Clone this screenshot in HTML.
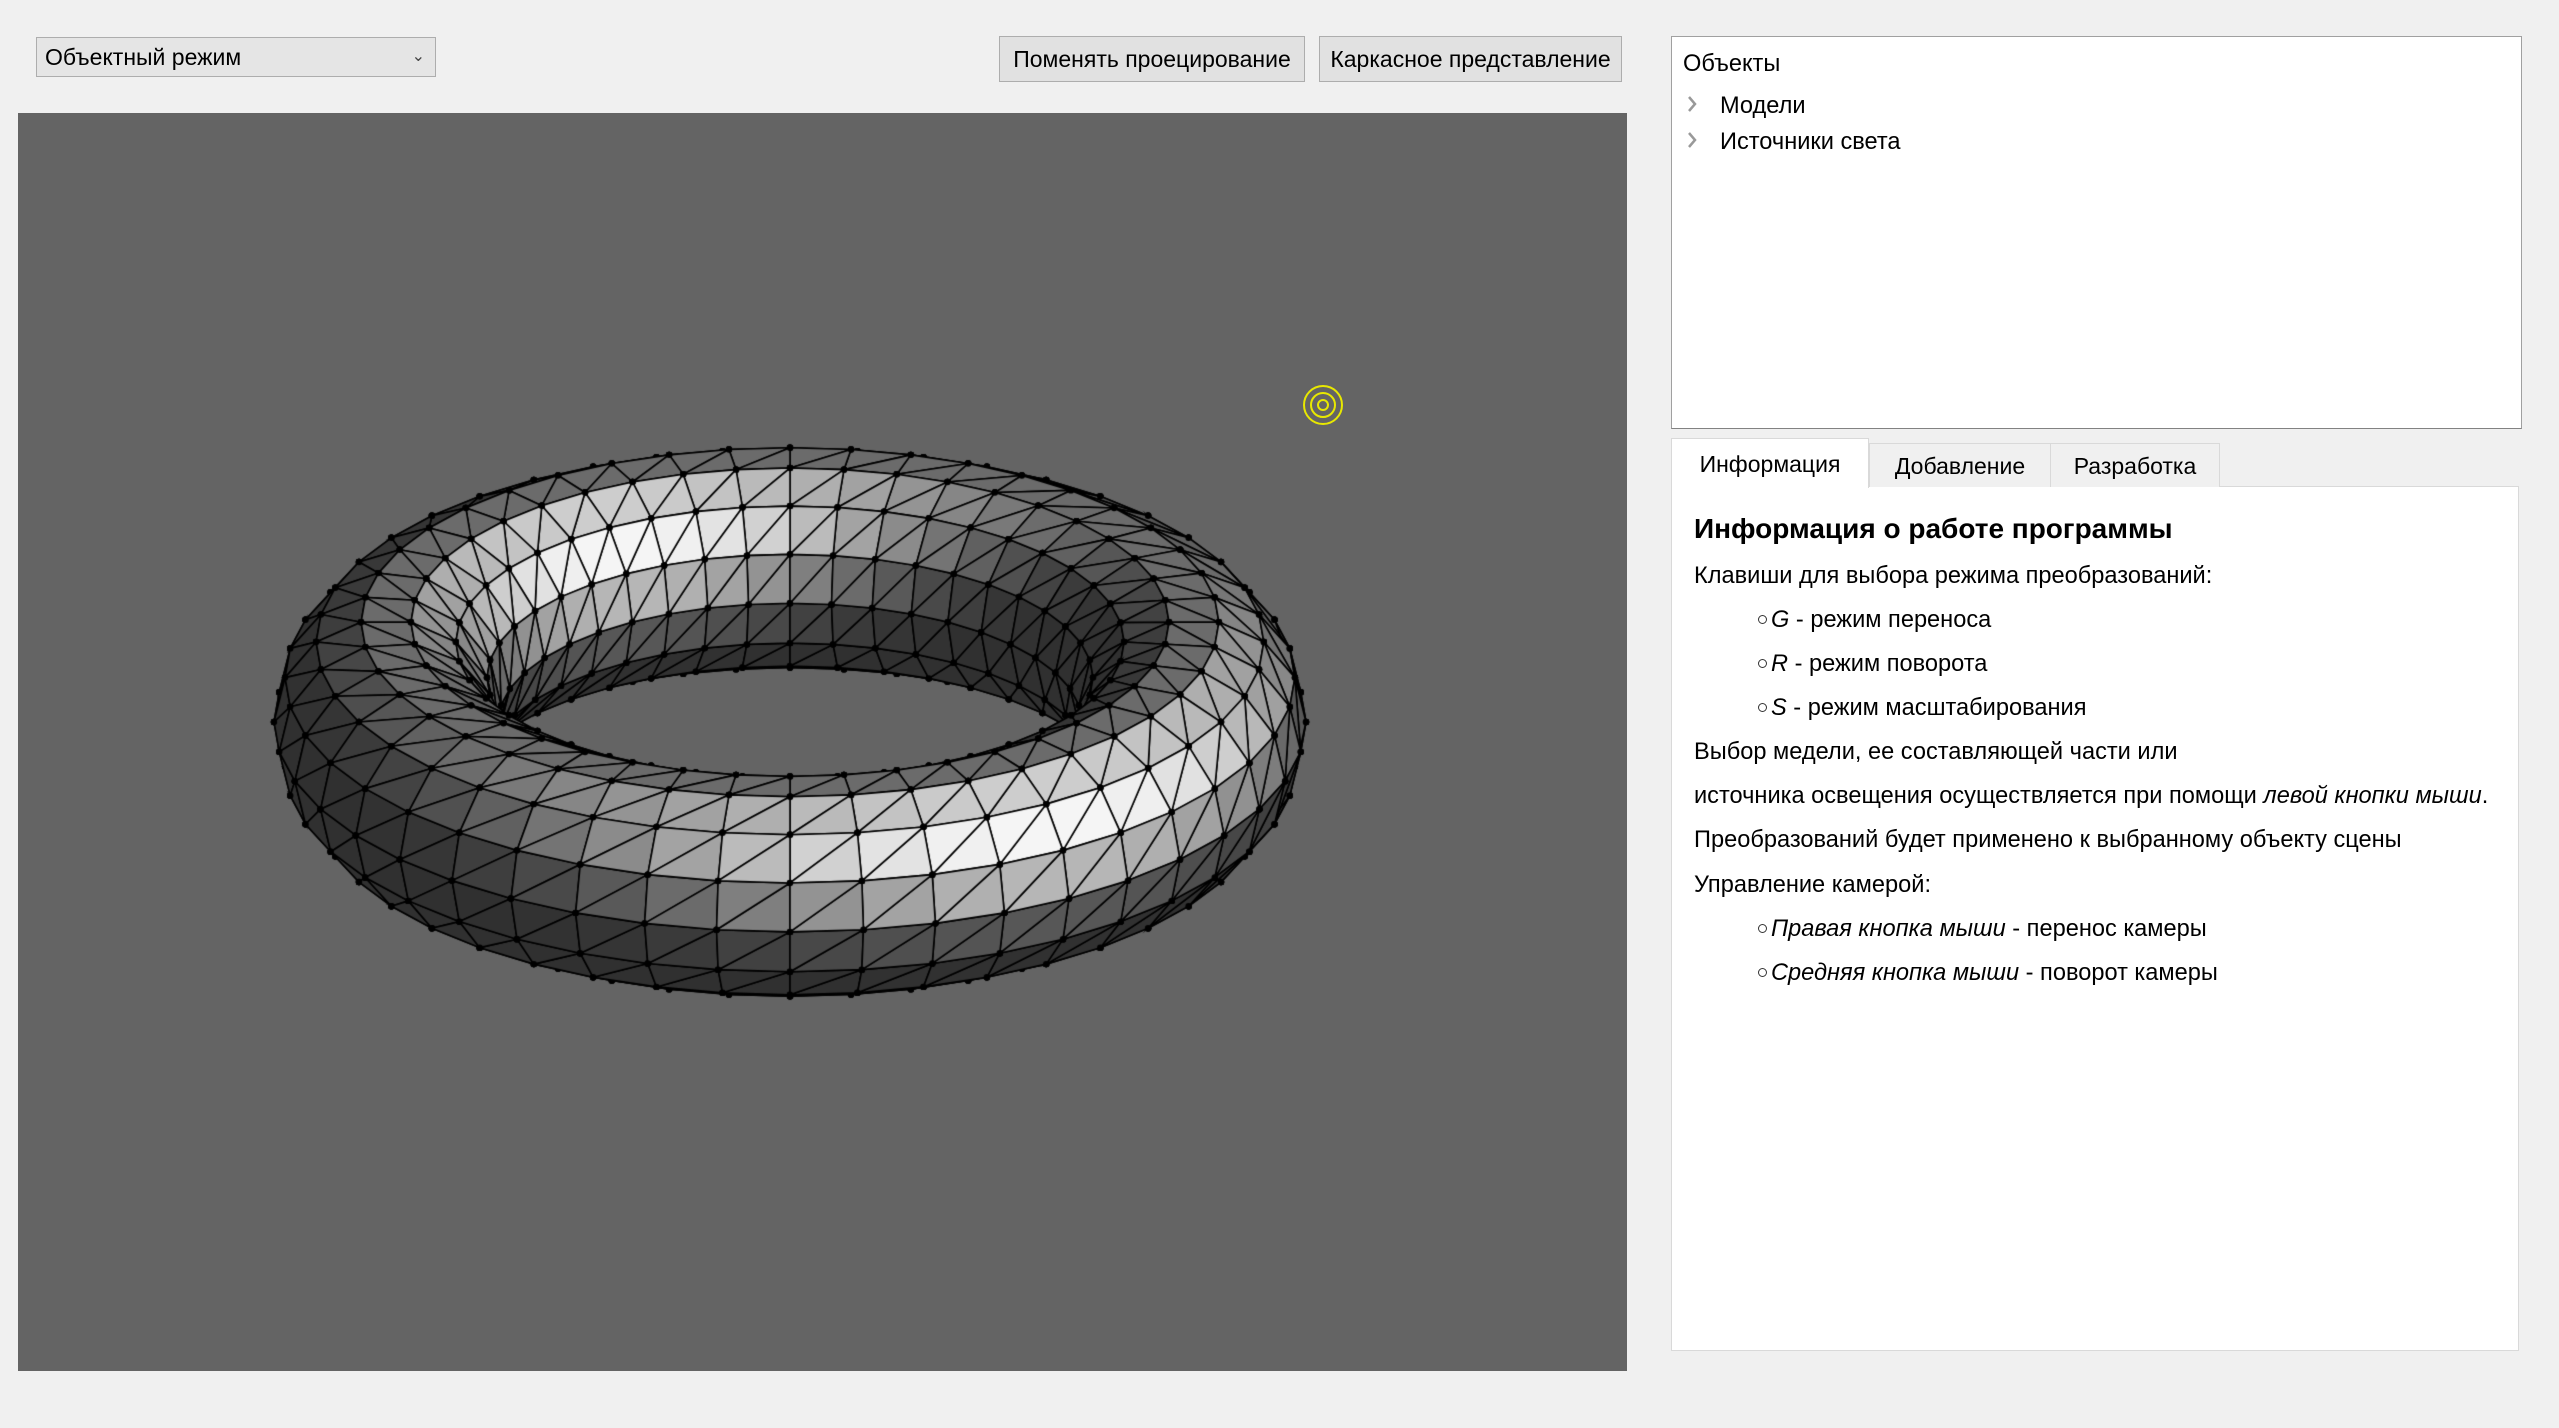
<!DOCTYPE html>
<html><head><meta charset="utf-8">
<style>
html,body{margin:0;padding:0;}
body{width:2559px;height:1428px;background:#f0f0f0;position:relative;overflow:hidden;font-family:"Liberation Sans","DejaVu Sans",sans-serif;color:#000;}
.abs{position:absolute;}
.combo{left:36px;top:37px;width:400px;height:40px;background:#e5e5e5;border:1px solid #adadad;box-sizing:border-box;font-size:23px;line-height:38px;padding-left:8px;}
.combo .arr{position:absolute;right:10px;top:0;font-size:16px;color:#444;}
.btn{top:36px;height:46px;background:#e1e1e1;border:1px solid #adadad;box-sizing:border-box;font-size:23px;line-height:44px;text-align:center;white-space:nowrap;}
.view{left:18px;top:113px;width:1609px;height:1258px;background:#646464;}
.tree{left:1671px;top:36px;width:851px;height:393px;background:#fff;border:1px solid #a0a0a0;border-bottom-color:#828282;box-sizing:border-box;}
.t{font-size:23.6px;white-space:nowrap;}
.tab{top:443px;height:44px;background:#f0f0f0;border:1px solid #d9d9d9;border-bottom:none;box-sizing:border-box;font-size:23px;line-height:44px;text-align:center;}
.panel{left:1671px;top:486px;width:848px;height:865px;background:#fff;border:1px solid #d9d9d9;box-sizing:border-box;}
.bul{display:inline-block;width:9px;height:9px;border:1.5px solid #333;border-radius:50%;margin-right:4px;vertical-align:3px;box-sizing:border-box;}
</style></head><body>
<div class="abs combo">Объектный режим<span class="arr">&#8964;</span></div>
<div class="abs btn" style="left:999px;width:306px;">Поменять проецирование</div>
<div class="abs btn" style="left:1319px;width:303px;">Каркасное представление</div>
<div class="abs view"><canvas id="c" width="1609" height="1258"></canvas>
<svg class="abs" style="left:1283px;top:270px" width="44" height="44"><circle cx="22" cy="22" r="19" fill="none" stroke="#e8e800" stroke-width="2"/><circle cx="22" cy="22" r="12" fill="none" stroke="#e8e800" stroke-width="2"/><circle cx="22" cy="22" r="5" fill="none" stroke="#e8e800" stroke-width="2"/></svg>
</div>
<div class="abs tree">
<div class="abs t" style="left:11px;top:14px;">Объекты</div>
<svg class="abs" style="left:14px;top:58px" width="12" height="18"><path d="M3 2 L9 9 L3 16" fill="none" stroke="#999" stroke-width="2.5"/></svg>
<div class="abs t" style="left:48px;top:56px;">Модели</div>
<svg class="abs" style="left:14px;top:94px" width="12" height="18"><path d="M3 2 L9 9 L3 16" fill="none" stroke="#999" stroke-width="2.5"/></svg>
<div class="abs t" style="left:48px;top:92px;">Источники света</div>
</div>
<div class="abs panel"></div>
<div class="abs tab" style="left:1671px;top:438px;width:198px;height:50px;background:#fff;line-height:50px;z-index:2;">Информация</div>
<div class="abs tab" style="left:1869px;width:182px;">Добавление</div>
<div class="abs tab" style="left:2050px;width:170px;">Разработка</div>
<div class="abs t" style="left:1694px;top:513px;font-size:28px;font-weight:bold;">Информация о работе программы</div>
<div class="abs t" style="left:1694px;top:563px;">Клавиши для выбора режима преобразований:</div>
<div class="abs t" style="left:1758px;top:607px;"><span class="bul"></span><i>G</i> - режим переноса</div>
<div class="abs t" style="left:1758px;top:651px;"><span class="bul"></span><i>R</i> - режим поворота</div>
<div class="abs t" style="left:1758px;top:695px;"><span class="bul"></span><i>S</i> - режим масштабирования</div>
<div class="abs t" style="left:1694px;top:739px;">Выбор медели, ее составляющей части или</div>
<div class="abs t" style="left:1694px;top:783px;">источника освещения осуществляется при помощи <i>левой кнопки мыши</i>.</div>
<div class="abs t" style="left:1694px;top:827px;">Преобразований будет применено к выбранному объекту сцены</div>
<div class="abs t" style="left:1694px;top:872px;">Управление камерой:</div>
<div class="abs t" style="left:1758px;top:916px;"><span class="bul"></span><i>Правая кнопка мыши</i> - перенос камеры</div>
<div class="abs t" style="left:1758px;top:960px;"><span class="bul"></span><i>Средняя кнопка мыши</i> - поворот камеры</div>
<script>
(function(){
var cv=document.getElementById('c'),g=cv.getContext('2d');
var R=404,r=112,th=24*Math.PI/180,cx=772,cy=609;
var NU=44,NV=14,ct=Math.cos(th),st=Math.sin(th);
function P(i,j){var u=2*Math.PI*i/NU,v=2*Math.PI*j/NV;
var x=(R+r*Math.cos(v))*Math.cos(u),y=r*Math.sin(v),z=(R+r*Math.cos(v))*Math.sin(u);
var yu=y*ct+z*st,d=z*ct-y*st;return [cx+x,cy-yu,d,x,yu];}
var V=[];for(var i=0;i<NU;i++){V[i]=[];for(var j=0;j<NV;j++)V[i][j]=P(i,j);}
var L=[0.4,0.35,-0.85];var n0=Math.hypot(L[0],L[1],L[2]);L=L.map(function(a){return a/n0;});
var T=[];
for(var i=0;i<NU;i++)for(var j=0;j<NV;j++){
var a=V[i][j],b=V[(i+1)%NU][j],c=V[(i+1)%NU][(j+1)%NV],d=V[i][(j+1)%NV];
T.push([a,b,c]);T.push([a,c,d]);}
var out=[];
T.forEach(function(t){
var a=t[0],b=t[1],c=t[2];
var ux=b[3]-a[3],uy=b[4]-a[4],uz=b[2]-a[2],vx=c[3]-a[3],vy=c[4]-a[4],vz=c[2]-a[2];
var nx=uy*vz-uz*vy,ny=uz*vx-ux*vz,nz=ux*vy-uy*vx;var l=Math.hypot(nx,ny,nz)||1;nx/=l;ny/=l;nz/=l;
if(nz>0){nx=-nx;ny=-ny;nz=-nz;}
var dep=(a[2]+b[2]+c[2])/3;
out.push({t:t,d:dep,n:[nx,ny,nz]});});
out.sort(function(p,q){return q.d-p.d;});
g.lineWidth=1.6;g.strokeStyle='#000';
out.forEach(function(o){
var t=o.t;var n=o.n;var dot=n[0]*L[0]+n[1]*L[1]+n[2]*L[2];
var k=Math.max(0,dot);var gv=Math.round(48+200*Math.pow(k,3));if(gv>245)gv=245;
g.fillStyle='rgb('+gv+','+gv+','+gv+')';
g.beginPath();g.moveTo(t[0][0],t[0][1]);g.lineTo(t[1][0],t[1][1]);g.lineTo(t[2][0],t[2][1]);g.closePath();g.fill();g.stroke();
g.fillStyle='#000';for(var m=0;m<3;m++){g.beginPath();g.arc(t[m][0],t[m][1],3.2,0,6.2832);g.fill();}
});
})();
</script>
</body></html>
